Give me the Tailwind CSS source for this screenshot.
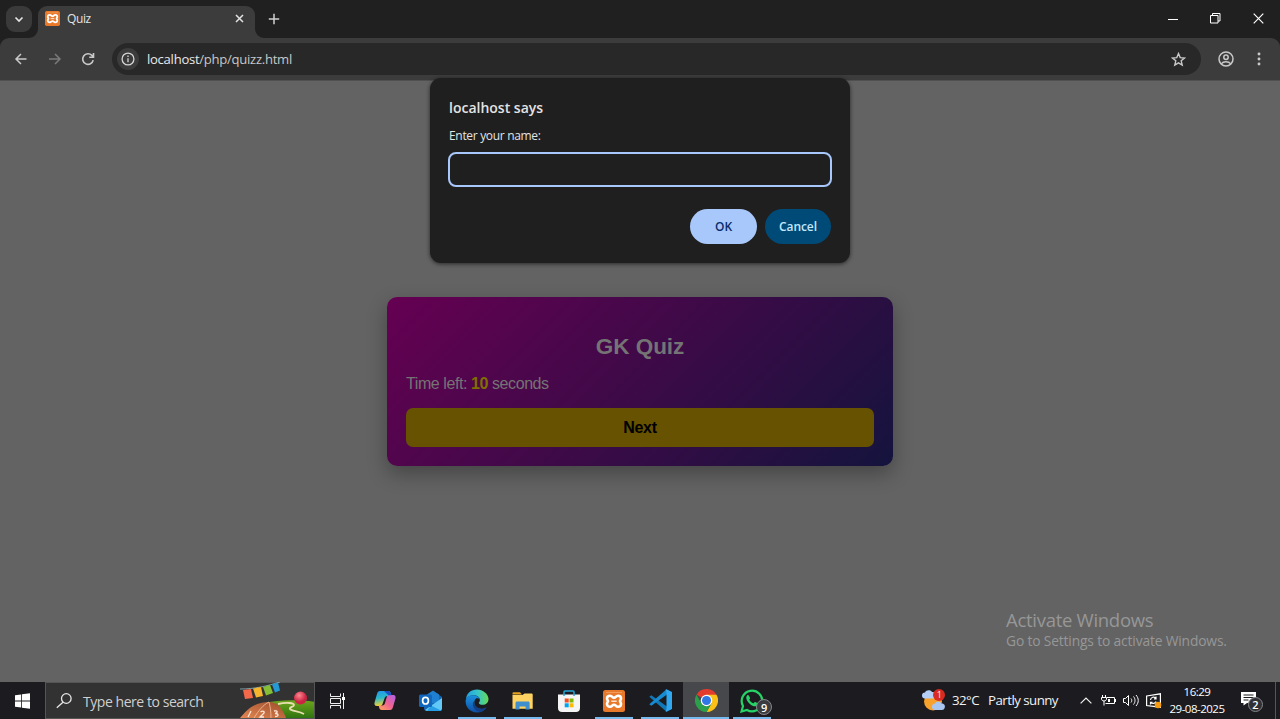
<!DOCTYPE html>
<html lang="en">
<head>
<meta charset="utf-8">
<title>Quiz</title>
<script src="https://cdn.jsdelivr.net/npm/@tailwindcss/browser@4"></script>
</head>
<body class="w-[1280px] h-[719px] overflow-hidden bg-[#636363] font-['Open_Sans',sans-serif]">
<svg class="hidden">
  <symbol id="xampp" viewBox="0 0 22 22">
    <rect width="22" height="22" rx="2.5" fill="#e8792b"/>
    <path d="M3 2.500h16" stroke="#f3a56c" stroke-width=".8"/>
    <path d="M7 5.700c2.500 0 2 2 4 2s1.500-2 4-2c2 0 3 1.200 3 2.800s-1 1.900-1 2.700 1 1.100 1 2.700-1 2.800-3 2.800c-2.500 0-2-2-4-2s-1.500 2-4 2c-2 0-3-1.200-3-2.800s1-1.900 1-2.700-1-1.100-1-2.700 1-2.800 3-2.800z" fill="none" stroke="#fff" stroke-width="2.600"/>
    <path d="M8.300 11.200h5.400" stroke="#fff" stroke-width="1.200"/>
  </symbol>
</svg>
<div class="flex h-full flex-col">

  <!-- Tab strip -->
  <header class="flex h-[38px] shrink-0 items-start bg-[#202020] pl-[6px] text-[#e3e3e3]">
    <button class="mt-[6px] flex h-[26px] w-[26px] items-center justify-center rounded-[9px] bg-[#3a3a3a]">
      <svg width="10" height="8" viewBox="0 0 10 8" fill="none" stroke="#e3e3e3" stroke-width="1.700"><path d="M1.500 2.500 5 6l3.500-3.500"/></svg>
    </button>
    <div class="relative ml-[6px] mt-[6px] flex h-[32px] w-[217px] items-center rounded-t-[9px] bg-[#3c3c3c] pb-[7px] pl-[7px]">
      <svg class="absolute -left-[9px] bottom-0" width="9" height="9"><path d="M9 0v9H0a9 9 0 0 0 9-9z" fill="#3c3c3c"/></svg>
      <svg class="absolute -right-[9px] bottom-0" width="9" height="9"><path d="M0 0v9h9a9 9 0 0 1-9-9z" fill="#3c3c3c"/></svg>
      <svg width="15" height="15"><use href="#xampp"/></svg>
      <span class="ml-[7px] pt-[1px] text-[12px] leading-[16px] tracking-[-0.4px]">Quiz</span>
      <svg class="ml-auto mr-[11px]" width="9" height="9" viewBox="0 0 9 9" stroke="#e3e3e3" stroke-width="1.500"><path d="m1 1 7 7M8 1 1 8"/></svg>
    </div>
    <svg class="ml-[13px] mt-[13px]" width="12" height="12" viewBox="0 0 12 12" stroke="#d0d0d0" stroke-width="1.500"><path d="M6 .8v10.400M.8 6h10.400"/></svg>
    <div class="ml-auto flex h-[37px] items-center">
      <span class="flex w-[43px] justify-center"><svg width="10" height="10" viewBox="0 0 10 10"><path d="M0 5.500h10" stroke="#fff"/></svg></span>
      <span class="flex w-[43px] justify-center"><svg width="11" height="11" viewBox="0 0 11 11" fill="none" stroke="#fff"><path d="M.5 2.500h7.500v7.500H.5zM2.500 2.500V.5h7.500V8H8"/></svg></span>
      <span class="flex w-[43px] justify-center"><svg width="11" height="11" viewBox="0 0 11 11" stroke="#fff" stroke-width="1.200"><path d="m.7.7 9.600 9.600M10.300.7.7 10.300"/></svg></span>
    </div>
  </header>

  <!-- Toolbar -->
  <div class="h-[43px] shrink-0 bg-[#202020]">
    <div class="flex h-full items-center rounded-t-[9px] border-b border-[#505050] bg-[#3c3c3c] pl-[14px]">
      <svg width="14" height="14" viewBox="0 0 14 14" fill="none" stroke="#c9c9c9" stroke-width="1.500"><path d="M12.500 7H2.500M7 2 2 7l5 5"/></svg>
      <svg class="ml-[20px]" width="14" height="14" viewBox="0 0 14 14" fill="none" stroke="#7a7a7a" stroke-width="1.500"><path d="M1 7h10.500M7 2l5 5-5 5"/></svg>
      <svg class="ml-[19px]" width="14" height="14" viewBox="0 0 14 14" fill="none" stroke="#c9c9c9" stroke-width="1.600"><path d="M12.200 8.100A5.300 5.300 0 1 1 10.900 3.400L12.200 4.800M12.500 1v4.300H8.200"/></svg>
      <div class="ml-[17px] flex h-[32px] w-[1089px] items-center rounded-full bg-[#282828] pl-[5px] pr-[15px]">
        <span class="flex h-[22px] w-[22px] items-center justify-center rounded-full bg-[#3c3c3c]">
          <svg width="14" height="14" viewBox="0 0 14 14" fill="none" stroke="#d5d5d5" stroke-width="1.300"><circle cx="7" cy="7" r="5.900"/><path d="M7 6.200v4M7 3.600v1.400"/></svg>
        </span>
        <span class="ml-[8px] text-[13.100px] leading-[18px] tracking-[-0.28px] text-[#c7c7c7]"><span class="text-[#e8e8e8]">localhost</span>/php/quizz.html</span>
        <svg class="ml-auto" width="15" height="15" viewBox="0 0 15 15" fill="none" stroke="#c9c9c9" stroke-width="1.400"><path d="m7.500 1.600 1.700 4 4.300.4-3.300 2.800 1 4.200-3.700-2.200L3.800 13l1-4.200L1.500 6l4.300-.4z"/></svg>
      </div>
      <svg class="ml-[16.500px]" width="16" height="16" viewBox="0 0 16 16" fill="none" stroke="#c9c9c9" stroke-width="1.500"><circle cx="8" cy="8" r="7"/><circle cx="8" cy="6.200" r="2.200"/><path d="M3.200 12.900c1.200-1.500 2.900-2.200 4.800-2.200s3.600.7 4.800 2.200"/></svg>
      <svg class="ml-[23px]" width="4" height="14" viewBox="0 0 4 14" fill="#c9c9c9"><circle cx="2" cy="2" r="1.450"/><circle cx="2" cy="7" r="1.450"/><circle cx="2" cy="12" r="1.450"/></svg>
    </div>
  </div>

  <!-- Page -->
  <main class="relative flex h-[601px] shrink-0 items-start justify-center font-['Liberation_Sans',Arial,sans-serif]">
    <section class="mt-[216px] h-[169px] w-[506px] rounded-[10px] bg-linear-[135deg,#660052,#14143d] px-[19px] text-[#747474] shadow-[0_8px_20px_rgba(0,0,0,0.3)]">
      <h1 class="pt-[36px] text-center text-[22.500px] font-bold leading-[28px]">GK Quiz</h1>
      <p class="mt-[14px] text-[16px] leading-[18px] tracking-[-0.42px]">Time left: <b class="text-[#807000]">10</b> seconds</p>
      <button class="mt-[15px] h-[39px] w-full rounded-[7px] bg-[#665200] text-[16px] font-bold tracking-[-0.3px] text-black">Next</button>
    </section>

    <!-- Prompt dialog -->
    <div class="absolute -top-[3px] left-[430px] flex h-[185px] w-[420px] flex-col rounded-[11px] bg-[#1f1f1f] px-[18px] font-['Open_Sans',sans-serif] text-[#e3e3e3] shadow-[0_1px_4px_rgba(0,0,0,0.6)]">
      <h2 class="ml-[1px] mt-[20px] text-[14px] font-semibold leading-[20px]">localhost says</h2>
      <p class="ml-[1px] mt-[9px] text-[12px] leading-[18px] tracking-[-0.32px]">Enter your name:</p>
      <div class="mt-[7px] h-[35px] w-[384px] rounded-[8px] border-2 border-[#a8c7fa]"></div>
      <div class="mt-[22px] flex justify-end gap-[8px] pr-[1px] text-[12px] font-semibold tracking-[-0.1px]">
        <button class="h-[35px] w-[67px] rounded-full bg-[#a8c7fa] text-[#062e6f]">OK</button>
        <button class="h-[35px] w-[66px] rounded-full bg-[#004a77] text-[#c2e7ff]">Cancel</button>
      </div>
    </div>

    <div class="absolute left-[1006px] top-[526px] whitespace-nowrap font-['Open_Sans',sans-serif] text-[#979797]">
      <p class="text-[18.500px] leading-[25px] tracking-[-0.28px]">Activate Windows</p>
      <p class="text-[13.800px] leading-[18px] tracking-[-0.15px]">Go to Settings to activate Windows.</p>
    </div>
  </main>

  <!-- Taskbar -->
  <footer class="flex h-[37px] shrink-0 bg-[#1c1c20] text-white">
    <div class="flex w-[45px] items-center justify-center">
      <svg width="15" height="16" viewBox="0 0 15 16" fill="#fff"><path d="M0 2.200 6.200 1.400v6.200H0zM7 1.300 15 .2v7.400H7zM0 8.400h6.200v6.200L0 13.800zM7 8.400h8v7.400l-8-1.100z"/></svg>
    </div>
    <div class="flex w-[270px] items-center border border-[#555] bg-[#323232] pl-[10px]">
      <svg width="16" height="16" viewBox="0 0 16 16" fill="none" stroke="#e6e6e6" stroke-width="1.300"><circle cx="10.300" cy="5.500" r="4.800"/><path d="M7 9.200.8 14.800"/></svg>
      <span class="ml-[11px] whitespace-nowrap pt-[1px] text-[14px] tracking-[-0.45px] text-[#cfcfcf]">Type here to search</span>
      <svg class="ml-auto self-end" width="74" height="36" viewBox="0 0 74 36">
        <defs>
          <linearGradient id="grass" x1="0" x2="0" y1="0" y2="1"><stop stop-color="#6da51c"/><stop offset="1" stop-color="#2f7410"/></linearGradient>
          <linearGradient id="track" x1="0" x2="1" y1="1" y2="0"><stop stop-color="#e38852"/><stop offset="1" stop-color="#9d4d2d"/></linearGradient>
          <radialGradient id="ball" cx=".4" cy=".3"><stop stop-color="#ff8790"/><stop offset="1" stop-color="#c92543"/></radialGradient>
        </defs>
        <path d="M25 21c15-4 38-3 51-1v16H42z" fill="url(#grass)"/>
        <path d="M0 36c7-8 13-15 27-16 7 0 11 2 13 5 3 4 5 8 6 11z" fill="url(#track)"/>
        <path d="M14 36c5-8 9-13 15-16M31 36c0-7-1-12-2-16" fill="none" stroke="#f7c3a0" stroke-width=".8"/>
        <path d="M38 22c9-2 16-1 16 1s-5 2-4 4 9 2 14 5" fill="none" stroke="#e8dfb0" stroke-width="1.800"/>
        <g fill="none" stroke="#ffe7d6" stroke-width="1.300"><path d="m11 29-3 6M20.500 30c3-2 5 0 2.500 2l-3 3h4M34 29c4-1 4 2 1 2.500 4 0 4 3 0 3"/></g>
        <g transform="translate(1 0)">
          <path d="M-1 7C14 7 26 4 39 0" fill="none" stroke="#8fbac0" stroke-width=".8"/>
          <path d="m2 8 8-1 2 9-8 1z" fill="#f4694a"/><path d="m12 6.500 8-1.500 2 9-7 1.500z" fill="#f5b52c"/><path d="m22 5 7-2 3 8-7 2.500z" fill="#84bf35"/><path d="m31 2.500 6-2 2 8-5 2z" fill="#2399d6"/>
        </g>
        <circle cx="60.500" cy="16" r="6.500" fill="url(#ball)"/>
      </svg>
    </div>
    <div class="flex w-[45px] items-center justify-center">
      <svg width="16" height="16" viewBox="0 0 16 16" fill="none" stroke="#eee"><path d="M.5.500v3h10v-3M.5 15.500v-3h10v3M.5 5.500h10v5H.5zM13.500 0v16"/><path d="M12 4h3v3h-3z" fill="#fff" stroke="none"/></svg>
    </div>
    <div class="ml-[2px] flex">
      <div class="flex w-[45.900px] items-center justify-center">
        <svg width="22" height="21" viewBox="0 0 22 21">
          <defs><linearGradient id="ca" x1="0" x2=".2" y2="1"><stop stop-color="#2296ed"/><stop offset=".5" stop-color="#2bb8ca"/><stop offset="1" stop-color="#f2cf35"/></linearGradient><linearGradient id="cb" x1="1" x2="0" y2="1"><stop stop-color="#ae62e9"/><stop offset=".5" stop-color="#ee6295"/><stop offset="1" stop-color="#ffa757"/></linearGradient></defs>
          <path d="M6 1h8c2 0 2.500 1 3 3l.5 2h-4c-2 0-2.600 1-3 2.500L8.500 14C8 15.500 7 16 5.500 16H3C.5 16 0 14 .7 12L3 4c.5-2 1.300-3 3-3z" fill="url(#ca)"/>
          <path d="M16 20H8c-2 0-2.500-1-3-3l-.3-1.500H8c2 0 2.600-1 3-2.500L12.500 8c.5-2 1-3 3-3H19c2.500 0 3 2 2.300 4L19 17c-.5 2-1.300 3-3 3z" fill="url(#cb)"/>
          <path d="M10 1h4c2 0 2.500 1 3 3l.4 1.200h-3z" fill="#1b50c5"/>
        </svg>
      </div>
      <div class="flex w-[45.900px] items-center justify-center">
        <svg width="23" height="21" viewBox="0 0 23 21"><path d="M5 7 14 .5 23 7v11a3 3 0 0 1-3 3H8a3 3 0 0 1-3-3z" fill="#1666b5"/><path d="M8 4.500 14 .8l6 3.700V13H8z" fill="#1f7fd0"/><path d="m6 20 17-12v10a3 3 0 0 1-3 3H8z" fill="#62c8f7"/><path d="M12 15.500 23 21H8z" fill="#279de5"/><rect y="4.500" width="13" height="12.500" rx="1.500" fill="#1067bd"/><ellipse cx="6.500" cy="10.700" rx="2.900" ry="3.300" fill="none" stroke="#fff" stroke-width="1.700"/></svg>
      </div>
      <div class="relative flex w-[45.900px] items-center justify-center">
        <svg width="24" height="24" viewBox="0 0 24 24">
          <defs><linearGradient id="ea" x1="0" x2="1"><stop stop-color="#249fe1"/><stop offset=".5" stop-color="#35c4cd"/><stop offset="1" stop-color="#66da53"/></linearGradient><linearGradient id="eb" x1="0" x2="0" y2="1"><stop stop-color="#1b91de"/><stop offset="1" stop-color="#0d4fa5"/></linearGradient></defs>
          <path d="M1 11C1 4.500 6 .5 12 .5S23.500 5 23.500 10c0 3.700-2.700 5.800-5.700 5.800-2.600 0-4-1-4-1.800 0-.7 1.100-1.100 1.100-3C14.900 8 12 6.200 8.500 6.200 4.500 6.200 1.500 8.500 1 11z" fill="url(#ea)"/>
          <path d="M.6 12C.8 8.500 4 6.200 8 6.200c3.700 0 6.300 1.800 6.800 4-1-1.200-2.600-1.300-3.700-.6-3.200 2-2.500 10.400 5.400 10.400 2.200 0 3.700-.8 5-1.800C19.600 21.500 16 23.500 12 23.500 5.500 23.500.4 18.500.6 12z" fill="url(#eb)"/>
          <path d="M8.500 12c-2 5 1 10 6.500 11.100 3-.8 5.200-2.600 6.500-4.900-6 3.400-12 .3-13-6.200z" fill="#123f86"/>
        </svg>
        <i class="absolute bottom-0 h-[2px] w-[38px] bg-[#76b9ed]"></i>
      </div>
      <div class="relative flex w-[45.900px] items-center justify-center">
        <svg width="21" height="18" viewBox="0 0 21 18"><path d="M.5 1.500c0-.8.500-1.300 1.200-1.300H8L10 2.500H.5z" fill="#e4a11c"/><path d="M.5 3h10l2-1.500h7.300c.5 0 .9.400.9.900v14.300H.5z" fill="#ffd261"/><path d="M3.500 17.500V11c0-1 .6-1.600 1.500-1.600h11c1 0 1.600.6 1.600 1.600v6.500h-4v-3H7.500v3z" fill="#3f8fcd"/></svg>
        <i class="absolute bottom-0 h-[2px] w-[38px] bg-[#76b9ed]"></i>
      </div>
      <div class="flex w-[45.900px] items-center justify-center">
        <svg width="22" height="22" viewBox="0 0 22 22"><path d="M0 4.500h22V18c0 2.500-1.500 4-4 4H4c-2.500 0-4-1.500-4-4z" fill="#f5f5f5"/><path d="M6 6V2c0-.7.400-1 1-1h8c.6 0 1 .3 1 1v4" fill="none" stroke="#24a7dc" stroke-width="1.500"/><path d="M6.700 8.500h4v4h-4z" fill="#f25022"/><path d="M11.500 8.500h4v4h-4z" fill="#7fba00"/><path d="M6.700 13.300h4v4h-4z" fill="#00a4ef"/><path d="M11.500 13.300h4v4h-4z" fill="#ffb900"/></svg>
      </div>
      <div class="relative flex w-[45.900px] items-center justify-center">
        <svg width="22" height="22"><use href="#xampp"/></svg>
        <i class="absolute bottom-0 h-[2px] w-[38px] bg-[#76b9ed]"></i>
      </div>
      <div class="relative flex w-[45.900px] items-center justify-center">
        <svg width="23" height="23" viewBox="0 0 23 23"><path d="m.3 7.800 2-1.500L18 17.500v5L16.700 22z" fill="#1277b7"/><path d="m.3 15.200 2 1.500L18 5.500v-5L16.700 1z" fill="#168bd2"/><path d="M16.500.8 17.500.3 23 3v17l-5.500 2.700-1-.5 1-2.200V3z" fill="#2fa7f1"/></svg>
        <i class="absolute bottom-0 h-[2px] w-[38px] bg-[#76b9ed]"></i>
      </div>
      <div class="relative flex w-[45.900px] items-center justify-center bg-[#47484c]">
        <svg width="23" height="23" viewBox="0 0 24 24"><path d="M12 12 1.600 6A12 12 0 0 1 22.400 6z" fill="#e33b2e"/><path d="M12 6h10.400A12 12 0 0 1 12 24l5.200-9z" fill="#fbc116"/><path d="M1.600 6 6.800 15c2 3.200 6.400 4 10.400 0L12 24A12 12 0 0 1 1.600 6z" fill="#2b9f49"/><circle cx="12" cy="12" r="6" fill="#fff"/><circle cx="12" cy="12" r="4.700" fill="#2f77e5"/></svg>
        <i class="absolute bottom-0 h-[2px] w-full bg-[#76b9ed]"></i>
      </div>
      <div class="relative flex w-[45.900px] items-center justify-center">
        <svg width="24" height="24" viewBox="0 0 24 24"><path d="M1.500 22.500 3 17A10.300 10.300 0 1 1 7 21z" fill="none" stroke="#25d366" stroke-width="2.200"/><path d="M8.800 6.600c-.4-.8-1-.9-1.700-.2-2.800 2.900 1.700 8.500 5.400 10.300 2.400 1.100 4.700.5 5.300-1.300.2-1-.1-1.300-2.500-2.300-.4-.2-.7 0-1.500 1.100-.4.500-3.700-1.400-4.600-3.700.5-.6 1-1 .9-1.600z" fill="#25d366"/></svg>
        <span class="absolute left-[27px] top-[17px] flex h-[16px] w-[16px] items-center justify-center rounded-full border border-[#85868a] bg-[#3b3c40] text-[11px] font-semibold leading-none">9</span>
        <i class="absolute bottom-0 h-[2px] w-[38px] bg-[#76b9ed]"></i>
      </div>
    </div>
    <!-- Weather -->
    <div class="ml-auto flex w-[154px] items-center whitespace-nowrap text-[13.300px] tracking-[-0.55px] text-[#f2f2f2]">
      <div class="relative w-[24px]">
        <svg width="24" height="22" viewBox="0 0 24 22"><circle cx="11" cy="11.500" r="9" fill="#f6a22d"/><path d="M3 8.500a3 3 0 0 1 0-6C4-.5 9-.5 10 2c2.500-.5 4 1.500 3.500 3.500-.3 2-1.500 3-3 3z" fill="#b5cff6"/><path d="M12.500 20a3.300 3.300 0 0 1 .5-6.500c1.500-3 5.500-2.500 6.300 0 3 0 4 2 3.500 4-.4 1.700-1.500 2.500-3 2.500z" fill="#a9c6f2"/></svg>
        <span class="absolute -top-[1px] left-[11px] flex h-[12px] w-[12px] items-center justify-center rounded-full bg-[#d92b24] text-[9px] leading-none">1</span>
      </div>
      <span class="ml-[6px]">32°C</span><span class="ml-[9px]">Partly sunny</span>
    </div>
    <!-- Tray -->
    <div class="flex w-[204px] items-center">
      <svg class="ml-[4px]" width="12" height="7" viewBox="0 0 12 7" fill="none" stroke="#f0f0f0" stroke-width="1.200"><path d="M.6 6.400 6 1l5.400 5.400"/></svg>
      <svg class="ml-[9px]" width="16" height="11" viewBox="0 0 16 11" fill="none" stroke="#fff"><path d="M6 2.500h7.500v6H4.500M14.500 4v3M1.500 0v2M4.500 0v2M.5 2.500h5v1.500c0 1-1 2-2.500 2S.5 5 .5 4zM3 6v4.500"/><path d="M7 4h2v3H7z" fill="#fff" stroke="none"/></svg>
      <svg class="ml-[6px]" width="17" height="13" viewBox="0 0 17 13" fill="none" stroke="#fff"><path d="M.5 4.500h2L5.500 1.500v10l-3-3h-2zM8 4.500c1 1.300 1 2.700 0 4M10.500 2.500c2 2.500 2 5.500 0 8M13 1c3 3.500 3 7.500 0 11"/></svg>
      <svg class="ml-[6px]" width="16" height="16" viewBox="0 0 16 16" fill="none" stroke="#fff" stroke-width="1.200"><path d="M.6 3 14.400.8v13.400L.6 12.500z"/><path d="M4.500 7A3 3 0 0 1 10 5.500M10 3.500v2.300H8M10 8.500a3 3 0 0 1-5 1M4.500 11.500V9.300h2"/><circle cx="12" cy="12" r="3.300" fill="#f39c12" stroke="none"/></svg>
      <div class="ml-[7px] w-[56px] whitespace-nowrap text-center text-[11.500px] leading-[16.500px] tracking-[-0.5px]"><p>16:29</p><p>29-08-2025</p></div>
      <div class="relative ml-[16px] h-[24px] w-[24px]">
        <svg width="16" height="17" viewBox="0 0 16 17"><path d="M0 3h15v11H6l-3.500 2.500V14H0z" fill="#fff"/><path d="M2.500 6h10M2.500 8.500h10M2.500 11h5" stroke="#1c1c20"/></svg>
        <span class="absolute left-[7px] top-[8px] flex h-[15px] w-[15px] items-center justify-center rounded-full border border-[#85868a] bg-[#303135] text-[11px] font-semibold leading-none">2</span>
      </div>
      <i class="ml-[10px] h-full w-px bg-[#55565a]"></i>
    </div>
  </footer>
</div>
</body>
</html>
